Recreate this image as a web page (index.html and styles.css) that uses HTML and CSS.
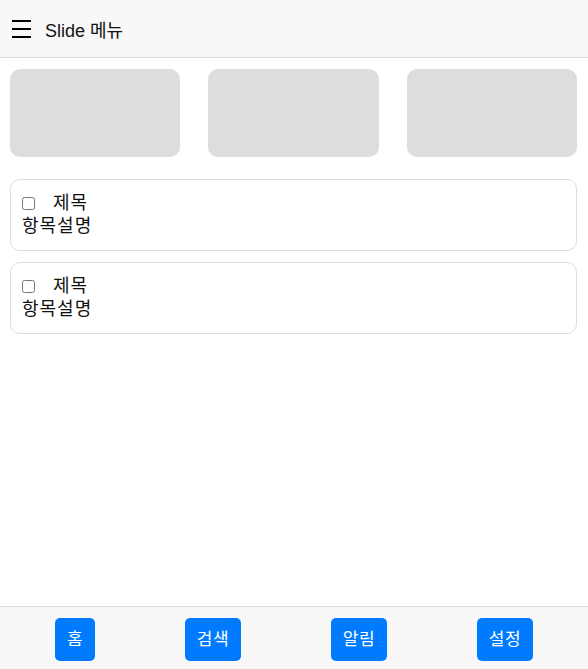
FILE: index.html
```html
<!DOCTYPE html>
<html lang="ko">
<head>
    <meta charset="UTF-8">
    <meta name="viewport" content="width=device-width, initial-scale=1.0">
    <title>Slide 메뉴</title>
    <link rel="stylesheet" href="styles.css">
</head>
<body>
    <header class="topbar">
        <div class="menu-icon">
            <span></span>
            <span></span>
            <span></span>
        </div>
        <h1 class="title">Slide 메뉴</h1>
    </header>

    <div class="thumbs">
        <div class="thumb"></div>
        <div class="thumb"></div>
        <div class="thumb"></div>
    </div>

    <div class="list">
        <div class="item">
            <label class="item-title"><input type="checkbox"> 제목</label>
            <div class="item-desc">항목설명</div>
        </div>
        <div class="item">
            <label class="item-title"><input type="checkbox"> 제목</label>
            <div class="item-desc">항목설명</div>
        </div>
    </div>

    <footer class="tabbar">
        <button>홈</button>
        <button>검색</button>
        <button>알림</button>
        <button>설정</button>
    </footer>
</body>
</html>
```

FILE: styles.css
```css
body {
    margin: 0;
    font-family: "Liberation Sans", "Noto Sans CJK KR", sans-serif;
    color: #111;
    background: #fff;
}
.topbar {
    display: flex;
    align-items: center;
    height: 57px;
    padding: 0 12px;
    background-color: #f8f8f8;
    border-bottom: 1px solid #ddd;
}
.menu-icon {
    display: flex;
    flex-direction: column;
    gap: 6px;
    width: 19px;
    margin-right: 14px;
}
.menu-icon span {
    display: block;
    height: 2px;
    background-color: #000;
}
.title {
    margin: 0;
    font-size: 18px;
    font-weight: normal;
}
.thumbs {
    display: flex;
    justify-content: space-between;
    padding: 11px 11px 0 10px;
}
.thumb {
    width: 30%;
    height: 88px;
    background-color: #ddd;
    border-radius: 10px;
}
.list {
    display: flex;
    flex-direction: column;
    gap: 11px;
    padding: 0 11px 0 10px;
    margin-top: 22px;
}
.item {
    padding: 12px 11px;
    border: 1px solid #ddd;
    border-radius: 10px;
    font-size: 18px;
    line-height: 23px;
    letter-spacing: 1px;
}
.item-title {
    display: flex;
    align-items: center;
}
.item-title input {
    width: 13px;
    height: 13px;
    margin: 0 18px 0 0;
}
.tabbar {
    position: fixed;
    left: 0;
    right: 0;
    bottom: 0;
    display: flex;
    justify-content: space-around;
    padding: 11px 10px 8px;
    background-color: #f8f8f8;
    border-top: 1px solid #ddd;
}
.tabbar button {
    padding: 10px 12px;
    font-family: "Liberation Sans", "Noto Sans CJK KR", sans-serif;
    font-size: 17px;
    line-height: 23px;
    letter-spacing: 0.5px;
    color: #fff;
    background-color: #007bff;
    border: none;
    border-radius: 5px;
}
```
